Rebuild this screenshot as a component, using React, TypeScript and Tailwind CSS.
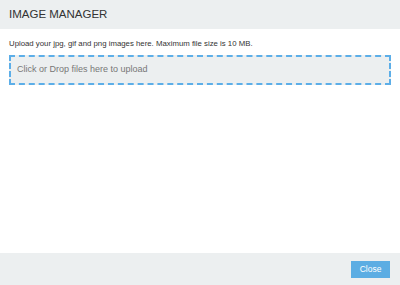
export default function App(): React.ReactElement {
  return (
    <div className="w-[400px] h-[285px] flex flex-col bg-white font-['Liberation_Sans',Arial,sans-serif]">
      <header className="h-[29px] px-[9px] flex items-center bg-[#eceff0]">
        <h1 className="text-[11.5px] uppercase text-[#333] leading-none">Image Manager</h1>
      </header>

      <main className="flex-1 px-[9px] pt-[10px] flex flex-col">
        <p className="text-[7.8px] text-[#333] leading-[10px]">
          Upload your jpg, gif and png images here. Maximum file size is 10 MB.
        </p>
        <div className="mt-[6px] h-[30px] border-2 border-dashed border-[#5caee8] bg-[#eceff0] flex items-center px-[6px]">
          <span className="text-[9px] text-[#777]">Click or Drop files here to upload</span>
        </div>
      </main>

      <footer className="h-[32px] bg-[#eceff0] flex items-center justify-end pr-[10px]">
        <button className="w-[39px] h-[17px] bg-[#5cade3] text-white text-[8.5px]">Close</button>
      </footer>
    </div>
  );
}
